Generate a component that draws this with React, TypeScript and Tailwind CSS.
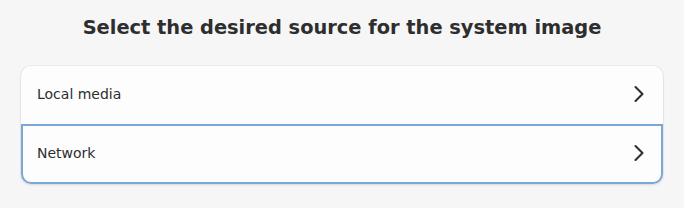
import { ChevronRight } from "lucide-react";

const ITEMS = ["Local media", "Network"];

export default function App() {
  return (
    <div
      className="h-[208px] w-[684px] bg-[#f6f6f6] px-[21px] pt-[14px]"
      style={{ fontFamily: '"DejaVu Sans", sans-serif' }}
    >
      <h1 className="text-center text-[19.4px] font-bold leading-[28px] text-[#2e2e2e]">
        Select the desired source for the system image
      </h1>
      <div className="mt-[24px] flex flex-col rounded-[10px] bg-[#fdfdfd] shadow-[0_0_0_1px_rgba(0,0,0,0.04),0_1px_3px_rgba(0,0,0,0.08)]">
        {ITEMS.map((label, i) => (
          <button
            key={label}
            className={
              i === 1
                ? "flex h-[60px] items-center justify-between rounded-b-[10px] border-2 border-[#7da6d8] pb-[2px] pl-[14px] pr-[8px] text-left text-[14px] text-[#2e2e2e]"
                : "flex h-[58px] items-center justify-between rounded-t-[10px] pb-[2px] pl-[16px] pr-[10px] text-left text-[14px] text-[#2e2e2e]"
            }
          >
            <span>{label}</span>
            <ChevronRight size={28} strokeWidth={1.8} className="text-[#2e2e2e]" />
          </button>
        ))}
      </div>
    </div>
  );
}
